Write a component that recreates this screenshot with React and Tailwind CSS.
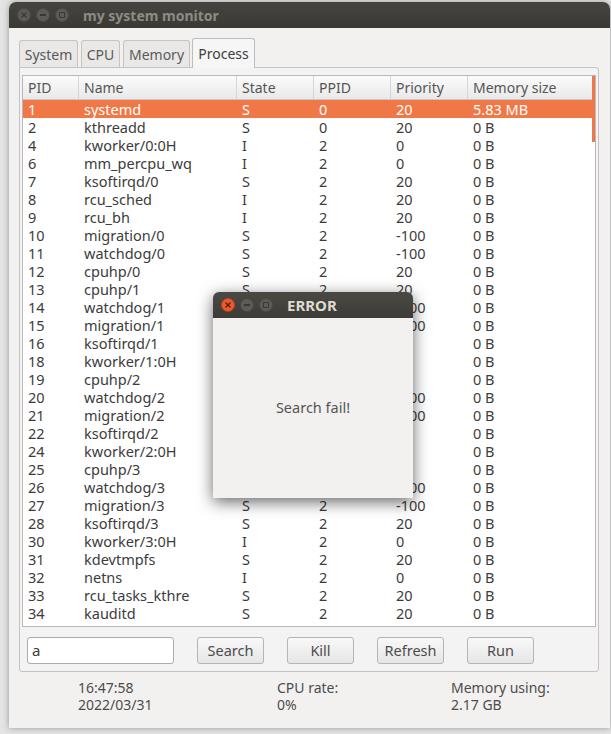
import React from 'react';

const rows = [
  ['1', 'systemd', 'S', '0', '20', '5.83 MB'],
  ['2', 'kthreadd', 'S', '0', '20', '0 B'],
  ['4', 'kworker/0:0H', 'I', '2', '0', '0 B'],
  ['6', 'mm_percpu_wq', 'I', '2', '0', '0 B'],
  ['7', 'ksoftirqd/0', 'S', '2', '20', '0 B'],
  ['8', 'rcu_sched', 'I', '2', '20', '0 B'],
  ['9', 'rcu_bh', 'I', '2', '20', '0 B'],
  ['10', 'migration/0', 'S', '2', '-100', '0 B'],
  ['11', 'watchdog/0', 'S', '2', '-100', '0 B'],
  ['12', 'cpuhp/0', 'S', '2', '20', '0 B'],
  ['13', 'cpuhp/1', 'S', '2', '20', '0 B'],
  ['14', 'watchdog/1', 'S', '2', '-100', '0 B'],
  ['15', 'migration/1', 'S', '2', '-100', '0 B'],
  ['16', 'ksoftirqd/1', 'S', '2', '20', '0 B'],
  ['18', 'kworker/1:0H', 'I', '2', '0', '0 B'],
  ['19', 'cpuhp/2', 'S', '2', '20', '0 B'],
  ['20', 'watchdog/2', 'S', '2', '-100', '0 B'],
  ['21', 'migration/2', 'S', '2', '-100', '0 B'],
  ['22', 'ksoftirqd/2', 'S', '2', '20', '0 B'],
  ['24', 'kworker/2:0H', 'I', '2', '0', '0 B'],
  ['25', 'cpuhp/3', 'S', '2', '20', '0 B'],
  ['26', 'watchdog/3', 'S', '2', '-100', '0 B'],
  ['27', 'migration/3', 'S', '2', '-100', '0 B'],
  ['28', 'ksoftirqd/3', 'S', '2', '20', '0 B'],
  ['30', 'kworker/3:0H', 'I', '2', '0', '0 B'],
  ['31', 'kdevtmpfs', 'S', '2', '20', '0 B'],
  ['32', 'netns', 'I', '2', '0', '0 B'],
  ['33', 'rcu_tasks_kthre', 'S', '2', '20', '0 B'],
  ['34', 'kauditd', 'S', '2', '20', '0 B'],
];

const headers = ['PID', 'Name', 'State', 'PPID', 'Priority', 'Memory size'];
const cols = 'grid grid-cols-[56px_158px_77px_77px_77px_1fr]';

const tabs = [
  ['System', 'w-[59px]'],
  ['CPU', 'w-[39px]'],
  ['Memory', 'w-[67px]'],
];

// Window control dots (close / minimise / maximise)
const WinButtons = ({ active }) => (
  <div className="flex items-center gap-[5px]">
    <div className={`w-[14px] h-[14px] rounded-full flex items-center justify-center ${active ? 'bg-[#ef5a2a] border border-[#b8401b]' : 'bg-[#5c5b57] border border-[#4a4945]'}`}>
      <svg width="6" height="6" viewBox="0 0 6 6"><path d="M0.5 0.5L5.5 5.5M5.5 0.5L0.5 5.5" stroke={active ? '#4a1a08' : '#3a3936'} strokeWidth="1.2" /></svg>
    </div>
    <div className="w-[14px] h-[14px] rounded-full bg-[#5c5b57] border border-[#4a4945] flex items-center justify-center">
      <div className="w-[6px] h-[1.5px] bg-[#3a3936]" />
    </div>
    <div className="w-[14px] h-[14px] rounded-full bg-[#5c5b57] border border-[#4a4945] flex items-center justify-center">
      <div className="w-[6px] h-[6px] border border-[#3a3936]" />
    </div>
  </div>
);

const Btn = ({ children }) => (
  <button className="w-[67px] h-[27px] rounded-[3px] border border-[#b5b5b5] bg-gradient-to-b from-[#f8f8f8] to-[#e6e6e6] text-[14.5px] text-[#4c4c4c] flex items-center justify-center">
    {children}
  </button>
);

export default function App() {
  return (
    <div className="w-[611px] h-[734px] bg-[#e4e4e4] relative overflow-hidden font-['Noto_Sans','Open_Sans',sans-serif] text-[#3c3c3c]">
      {/* main window */}
      <div className="absolute left-[9px] top-[2px] w-[601px] h-[726px] bg-[#f2f1f0] rounded-t-[7px] shadow-[0_0_6px_rgba(0,0,0,0.35)] flex flex-col">
        <div className="h-[26px] rounded-t-[7px] bg-gradient-to-b from-[#45443f] to-[#3a3935] flex items-center pl-[8px]">
          <WinButtons />
          <span className="ml-[14px] text-[14px] font-bold text-[#8e8b85]">my system monitor</span>
        </div>

        <div className="flex-1 px-[10px] pt-[10px]">
          {/* tabs */}
          <div className="flex items-end gap-[3px] h-[29px] relative z-10">
            {tabs.map(([t, w]) => (
              <div key={t} className={`${w} h-[27px] border border-[#c4c4c4] border-b-0 rounded-t-[3px] bg-[#e9e8e7] text-[14px] text-[#5a5a5a] flex items-center justify-center`}>
                {t}
              </div>
            ))}
            <div className="w-[63px] -ml-px h-[30px] -mb-px border border-[#bdbdbd] border-b-0 rounded-t-[3px] bg-[#f6f6f6] text-[14px] text-[#3c3c3c] flex items-center justify-center">
              Process
            </div>
          </div>

          {/* pane */}
          <div className="w-[580px] h-[605px] border border-[#c4c4c4] rounded-b-[3px] rounded-tr-[3px] bg-[#f3f3f3] pl-[2px] pr-[2px] pt-[7px] flex flex-col">
            <div className="relative h-[552px] w-[574px] border border-[#b8b8b8] bg-white overflow-hidden">
              <div className={`${cols} h-[24px] bg-gradient-to-b from-[#fbfbfb] to-[#e9e9e9] border-b border-[#c9c9c9] text-[14px] text-[#555]`}>
                {headers.map((h, i) => (
                  <div key={h} className={`px-[5px] flex items-center ${i < 5 ? 'border-r border-[#d6d6d6]' : ''}`}>{h}</div>
                ))}
              </div>
              {rows.map((r, idx) => (
                <div key={r[0]} className={`${cols} h-[18px] text-[14.5px] leading-[18px] ${idx === 0 ? 'bg-[#f07746] text-white' : ''}`}>
                  {r.map((c, i) => (
                    <div key={i} className="px-[5px] whitespace-nowrap">{c}</div>
                  ))}
                </div>
              ))}
              {/* overlay scroll indicator */}
              <div className="absolute right-0 top-0 w-[3px] h-[66px] bg-[#f07746]" />
            </div>

            <div className="flex items-center mt-[10px] pl-[5px] gap-[23px]">
              <div className="w-[147px] h-[27px] border border-[#acacac] rounded-[3px] bg-white text-[15px] text-[#3c3c3c] pl-[4px] flex items-center">a</div>
              <Btn>Search</Btn>
              <Btn>Kill</Btn>
              <Btn>Refresh</Btn>
              <Btn>Run</Btn>
            </div>
          </div>

          {/* status line */}
          <div className="flex pl-[59px] pt-[7px] text-[14px] leading-[17px] text-[#4c4c4c]">
            <div className="w-[199px]">
              <div>16:47:58</div>
              <div>2022/03/31</div>
            </div>
            <div className="w-[174px]">
              <div>CPU rate:</div>
              <div>0%</div>
            </div>
            <div>
              <div>Memory using:</div>
              <div>2.17 GB</div>
            </div>
          </div>
        </div>
      </div>

      {/* error dialog */}
      <div className="absolute left-[213px] top-[292px] w-[200px] h-[206px] bg-[#f2f1f0] rounded-t-[6px] shadow-[0_4px_16px_rgba(0,0,0,0.6)] flex flex-col">
        <div className="h-[26px] rounded-t-[6px] bg-gradient-to-b from-[#4a4944] to-[#3c3b37] flex items-center pl-[8px]">
          <WinButtons active />
          <span className="ml-[14px] text-[15px] font-bold text-[#dfdbd2]">ERROR</span>
        </div>
        <div className="flex-1 flex items-center justify-center text-[14.5px] text-[#555]">Search fail!</div>
      </div>
    </div>
  );
}
